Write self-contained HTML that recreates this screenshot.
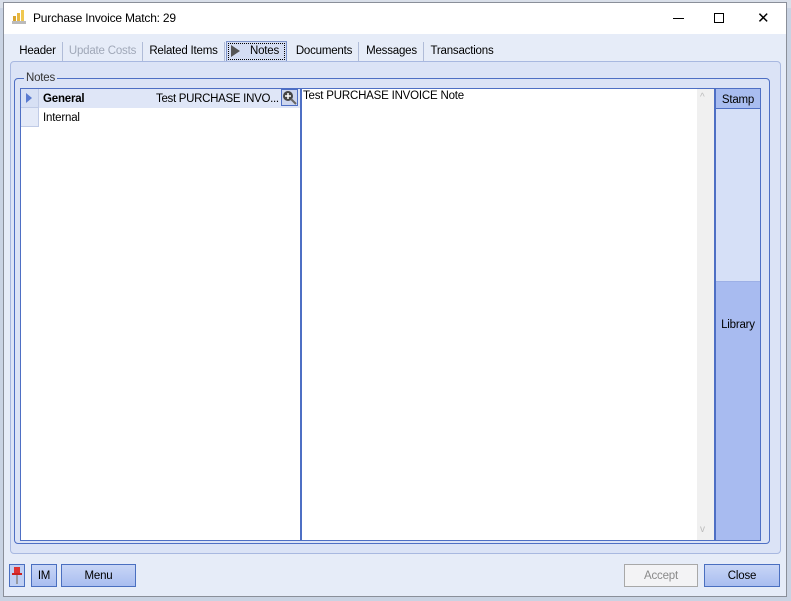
<!DOCTYPE html>
<html><head><style>
*{box-sizing:border-box;margin:0;padding:0}
body{width:791px;height:601px;overflow:hidden;background:#c9d3e3;font-family:"Liberation Sans",sans-serif;font-size:12px;letter-spacing:-0.2px;color:#000;position:relative}
.a{position:absolute;white-space:nowrap}
.btn{position:absolute;border:1px solid #4a6fc0;background:linear-gradient(#c8d6f6,#a9bdf0);text-align:center;line-height:22px;font-size:11.5px}
.tab{position:absolute;top:42px;height:20px;line-height:19px;font-size:11.5px;border-right:1px solid #b0bcd8;text-align:center;white-space:nowrap}
</style></head><body>
<div class="a" style="left:0;top:0;width:791px;height:8px;background:#d9dfe9"></div>
<div class="a" style="left:3px;top:2px;width:784px;height:595px;background:#e6ecf8;border:1px solid #8a8f99"></div>
<div class="a" style="left:4px;top:3px;width:782px;height:31px;background:#fff"></div>
<svg class="a" style="left:11px;top:9px" width="16" height="16"><rect x="2" y="7" width="3" height="8" fill="#d8a530"/><rect x="6" y="4" width="3" height="11" fill="#e8b840"/><rect x="10" y="1" width="3" height="14" fill="#f0c850"/><rect x="1" y="12" width="14" height="3" fill="#bbb"/></svg>
<div class="a" style="left:33px;top:11px;font-size:12px">Purchase Invoice Match: 29</div>
<div class="a" style="left:673px;top:18px;width:11px;height:1px;background:#000"></div>
<div class="a" style="left:714px;top:13px;width:10px;height:10px;border:1px solid #000"></div>
<div class="a" style="left:757px;top:9px;font-size:15px">✕</div>
<div class="tab" style="left:13px;width:50px">Header</div>
<div class="tab" style="left:63px;width:80px;color:#a0a8b8">Update Costs</div>
<div class="tab" style="left:143px;width:82px">Related Items</div>
<div class="a" style="left:226px;top:41px;width:61px;height:21px;border:1px solid #7d93c8;background:#d4ddf3"></div>
<div class="a" style="left:228px;top:43px;width:57px;height:17px;border:1px dotted #000"></div>
<svg class="a" style="left:231px;top:45px" width="10" height="12"><path d="M0 0L9 6L0 12Z" fill="#555"/></svg>
<div class="a" style="left:250px;top:45px;font-size:11.5px">Notes</div>
<div class="tab" style="left:290px;width:69px">Documents</div>
<div class="tab" style="left:360px;width:64px">Messages</div>
<div class="tab" style="left:424px;width:76px;border:none">Transactions</div>
<div class="a" style="left:10px;top:61px;width:771px;height:493px;background:#dbe3f6;border:1px solid #a8b8e0;border-radius:4px"></div>
<div class="a" style="left:14px;top:78px;width:756px;height:466px;border:1px solid #4e6fc4;border-radius:4px"></div>
<div class="a" style="left:24px;top:72px;background:#dbe3f6;padding:0 2px;color:#333;font-size:11.5px">Notes</div>
<div class="a" style="left:20px;top:88px;width:281px;height:453px;background:#fff;border:1px solid #4e6fc4"></div>
<div class="a" style="left:21px;top:89px;width:279px;height:19px;background:#dfe6f7"></div>
<div class="a" style="left:21px;top:89px;width:18px;height:19px;background:#d7e0f4;border-bottom:1px solid #c0cbe6;border-right:1px solid #c0cbe6"></div>
<div class="a" style="left:21px;top:108px;width:18px;height:19px;background:#e4eaf8;border-bottom:1px solid #c0cbe6;border-right:1px solid #c0cbe6"></div>
<svg class="a" style="left:26px;top:93px" width="6" height="10"><path d="M0 0L6 5L0 10Z" fill="#5a7bd0"/></svg>
<div class="a" style="left:43px;top:93px;font-weight:bold;font-size:11.5px">General</div>
<div class="a" style="left:156px;top:93px;font-size:11.5px;letter-spacing:-0.3px">Test PURCHASE INVO...</div>
<div class="a" style="left:281px;top:89px;width:17px;height:17px;border:1px solid #4e6fc4;background:#cdd6ee"></div>
<svg class="a" style="left:282px;top:90px" width="16" height="16"><circle cx="6" cy="6" r="5" fill="#444"/><path d="M6 3v6M3 6h6" stroke="#fff" stroke-width="1.5"/><path d="M9 9l5 5" stroke="#666" stroke-width="2"/></svg>
<div class="a" style="left:43px;top:112px;font-size:11.5px">Internal</div>
<div class="a" style="left:300px;top:88px;width:415px;height:453px;background:#fff;border:1px solid #4e6fc4;border-left:2px solid #4e6fc4"></div>
<div class="a" style="left:303px;top:90px;font-size:11.5px">Test PURCHASE INVOICE Note</div>
<div class="a" style="left:697px;top:89px;width:17px;height:451px;background:#f0f0f0"></div>
<div class="a" style="left:700px;top:92px;color:#bbb;font-size:10px">^</div>
<div class="a" style="left:700px;top:524px;color:#bbb;font-size:10px">v</div>
<div class="a" style="left:714px;top:88px;width:47px;height:453px;border:1px solid #4e6fc4;border-left:2px solid #4e6fc4;background:#d6e0f7"></div>
<div class="a" style="left:716px;top:281px;width:44px;height:259px;background:#a8bbf0;border-top:1px solid #9db0e6"></div>
<div class="a" style="left:716px;top:89px;width:44px;height:20px;background:#a9bdf0;border-bottom:1px solid #4e6fc4;text-align:center;line-height:22px;font-size:11.5px">Stamp</div>
<div class="a" style="left:716px;top:319px;width:44px;text-align:center;font-size:11.5px">Library</div>
<div class="a" style="left:9px;top:564px;width:16px;height:23px;border:1px solid #4a6fc0;background:#c0d0f4"></div>
<svg class="a" style="left:11px;top:566px" width="12" height="20"><rect x="3" y="1" width="6" height="7" fill="#d33"/><rect x="1" y="7" width="10" height="2" fill="#c22"/><path d="M6 9v9" stroke="#888" stroke-width="1.5"/></svg>
<div class="btn" style="left:31px;top:564px;width:26px;height:23px">IM</div>
<div class="btn" style="left:61px;top:564px;width:75px;height:23px">Menu</div>
<div class="a" style="left:624px;top:564px;width:74px;height:23px;border:1px solid #a8a8a8;background:#f3f3f5;color:#8a8a8a;text-align:center;line-height:22px;font-size:11.5px">Accept</div>
<div class="btn" style="left:704px;top:564px;width:76px;height:23px">Close</div>
</body></html>
